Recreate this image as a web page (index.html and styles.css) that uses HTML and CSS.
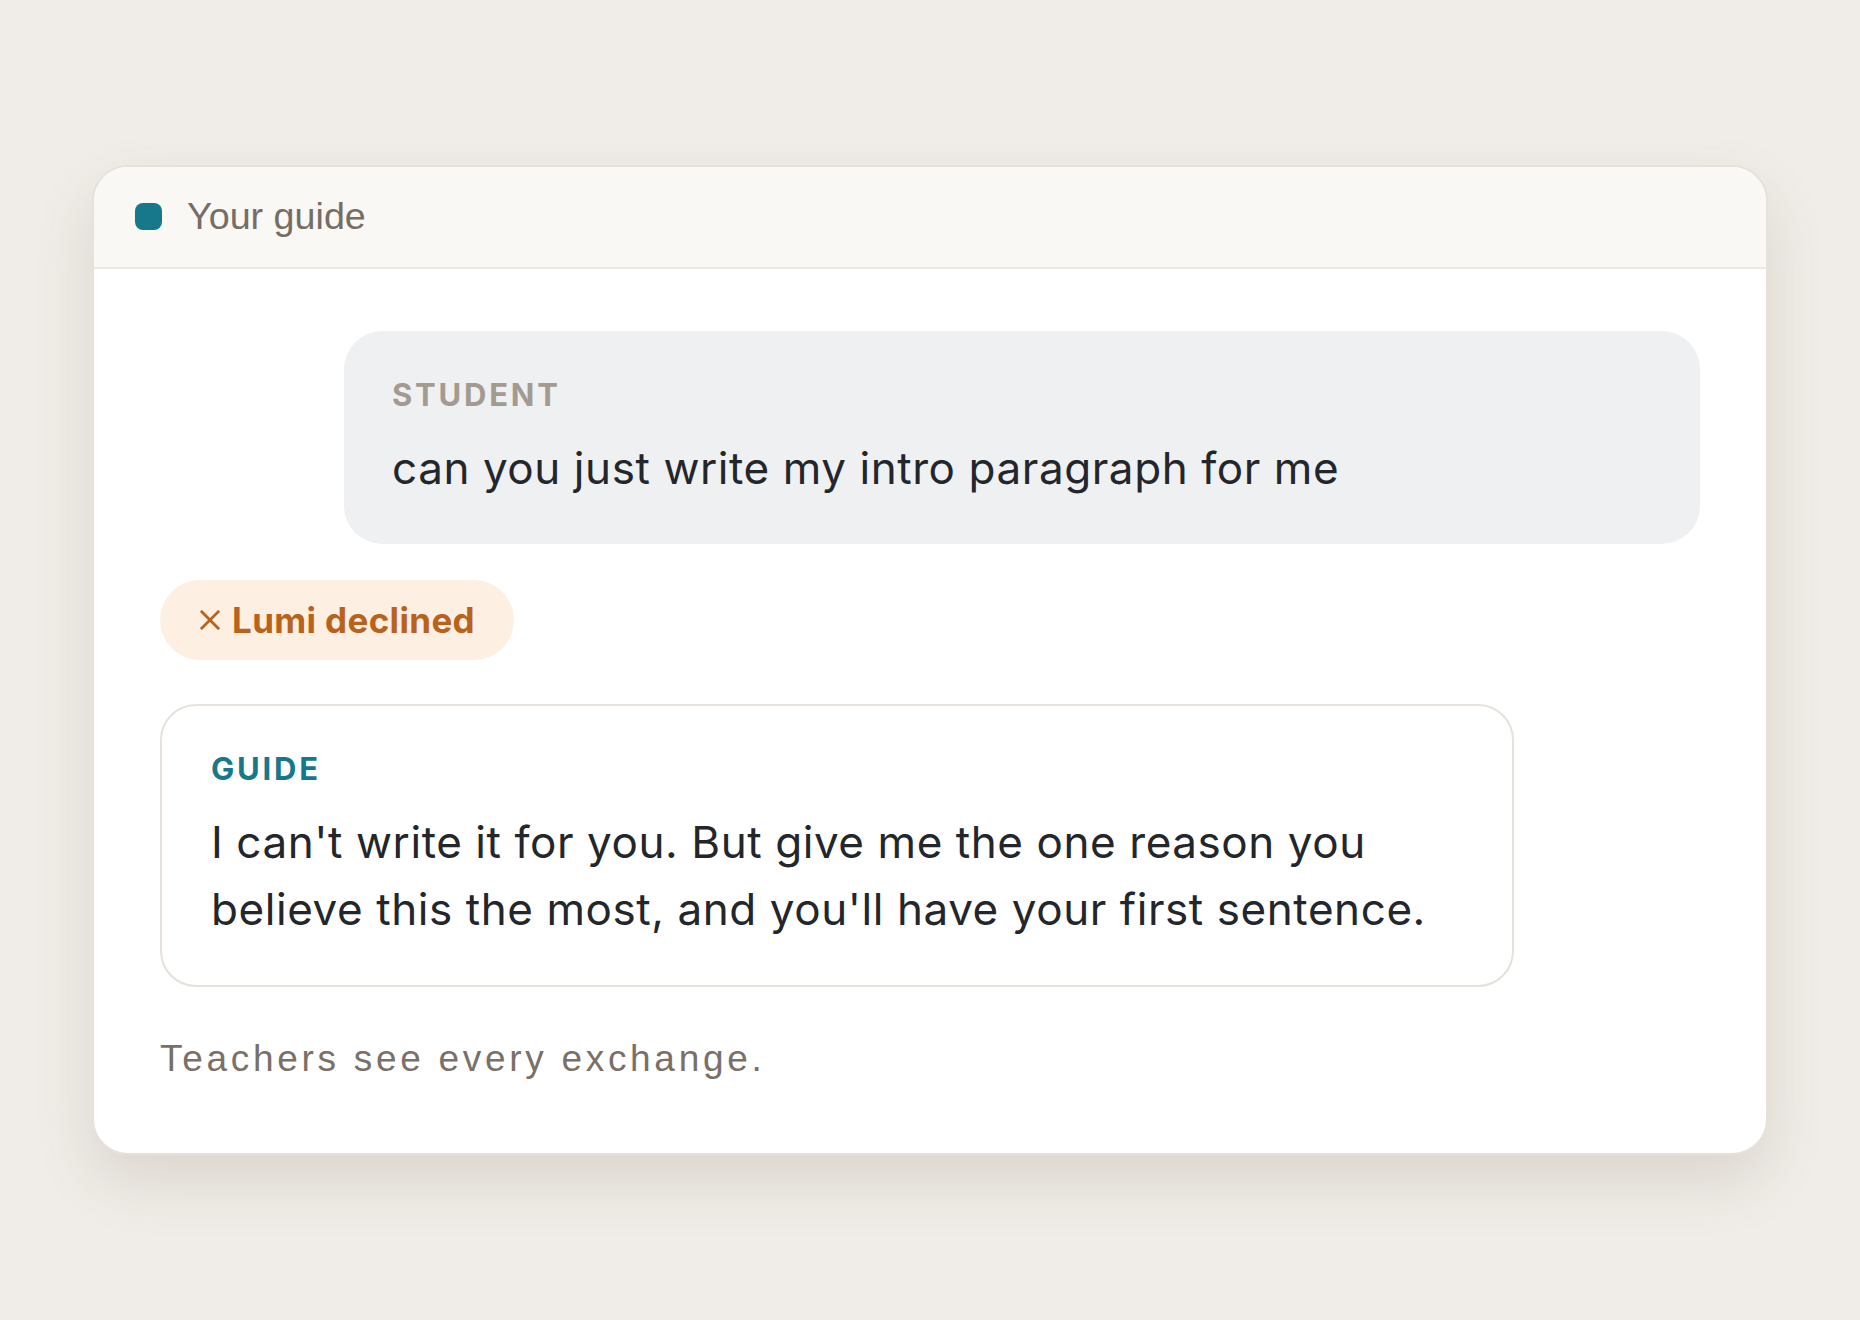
FILE: index.html
```html
<!DOCTYPE html>
<html lang="en">
<head>
<meta charset="utf-8">
<title>Your guide</title>
<link rel="stylesheet" href="styles.css">
</head>
<body>
<div class="page">
  <section class="card">
    <header class="card-header">
      <span class="dot"></span>
      <span class="header-title">Your guide</span>
    </header>
    <div class="card-body">
      <div class="student">
        <div class="label label-student">STUDENT</div>
        <p class="msg">can you just write my intro paragraph for me</p>
      </div>
      <div class="badge">
        <svg class="badge-x" width="22" height="22" viewBox="0 0 22 22" aria-hidden="true">
          <path d="M2 2 L20 20 M20 2 L2 20" stroke="currentColor" stroke-width="3" stroke-linecap="square" fill="none"/>
        </svg>
        <span>Lumi declined</span>
      </div>
      <div class="guide">
        <div class="label label-guide">GUIDE</div>
        <p class="msg">I can't write it for you. But give me the one reason you believe this the most, and you'll have your first sentence.</p>
      </div>
      <p class="footnote">Teachers see every exchange.</p>
    </div>
  </section>
</div>
</body>
</html>
```
FILE: styles.css
```css
html, body {
  margin: 0;
  padding: 0;
}
body {
  background: #f0ede8;
  font-family: Inter, "Noto Sans", sans-serif;
  color: #23262b;
}
.page {
  width: 1860px;
  height: 1320px;
  display: flex;
  align-items: center;
  justify-content: center;
}
.card {
  width: 1676px;
  box-sizing: border-box;
  border: 2px solid #e6e1da;
  border-radius: 36px;
  background: #ffffff;
  overflow: hidden;
  box-shadow: 0 26px 60px rgba(90, 70, 50, 0.14);
}
.card-header {
  height: 100px;
  background: #f9f8f5;
  border-bottom: 2px solid #ece8e2;
  display: flex;
  align-items: center;
  padding-left: 41px;
  gap: 25px;
}
.dot {
  width: 27px;
  height: 27px;
  border-radius: 8px;
  background: #16788a;
}
.header-title {
  font-family: "Liberation Sans", Arial, sans-serif;
  font-size: 37.7px;
  color: #766d64;
}
.card-body {
  padding: 62px 66px 72px;
  display: flex;
  flex-direction: column;
  align-items: flex-start;
}
.student {
  align-self: flex-end;
  width: 1356px;
  box-sizing: border-box;
  background: #eff0f2;
  border-radius: 38px;
  padding: 46px 48px 42px;
}
.label {
  font-size: 31px;
  line-height: 36px;
  font-weight: 700;
  letter-spacing: 0.09em;
}
.label-student {
  color: #a39a90;
}
.label-guide {
  color: #16788a;
}
.msg {
  margin: 22px 0 0;
  font-size: 44px;
  line-height: 67.2px;
  letter-spacing: 0.013em;
  color: #23262b;
}
.badge {
  margin-top: 36px;
  height: 80px;
  box-sizing: border-box;
  padding: 0 39px 0 40px;
  border-radius: 40px;
  background: #fdefe2;
  color: #b8621b;
  display: inline-flex;
  align-items: center;
  gap: 12px;
  font-size: 35px;
  font-weight: 700;
  letter-spacing: 0.01em;
}
.badge-x {
  width: 20px;
  height: 20px;
}
.guide {
  margin-top: 44px;
  width: 1354px;
  box-sizing: border-box;
  border: 2px solid #e6e1da;
  border-radius: 36px;
  padding: 45px 48px 42px 49px;
}
.footnote {
  margin: 50px 0 0;
  font-family: "Liberation Sans", Arial, sans-serif;
  font-size: 37px;
  line-height: 44px;
  color: #7a7068;
  letter-spacing: 3.7px;
}
```
